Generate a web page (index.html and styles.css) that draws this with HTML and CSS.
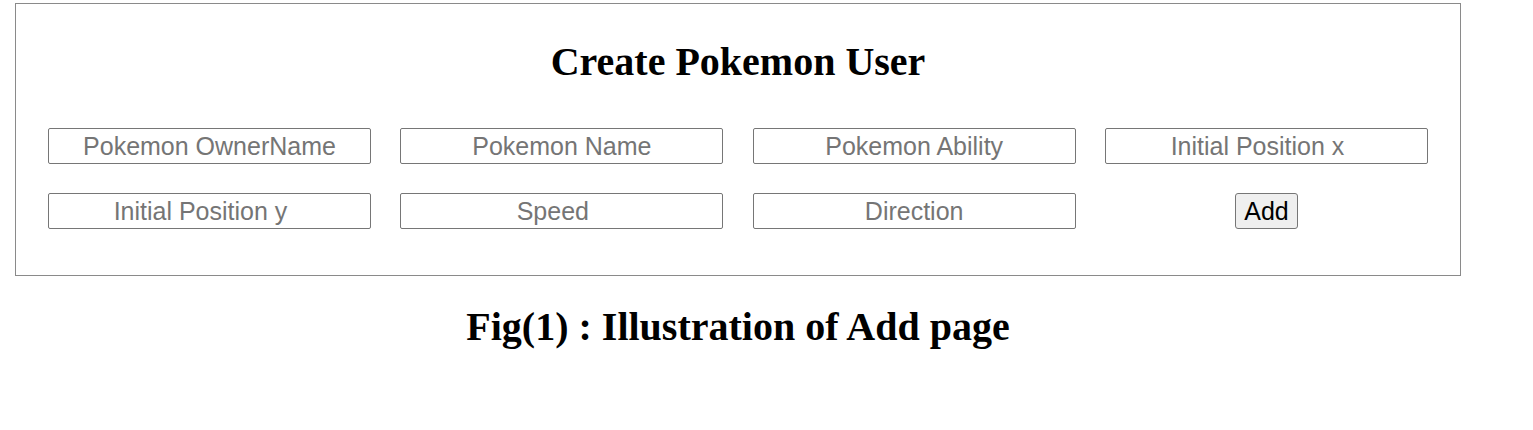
FILE: index.html
```html
<!DOCTYPE html>
<html>
<head>
<meta charset="utf-8">
<title>Create Pokemon User</title>
<link rel="stylesheet" href="styles.css">
</head>
<body>
<div class="page">
  <form class="card">
    <h1 class="title">Create Pokemon User</h1>
    <div class="fields">
      <input class="field" type="text" placeholder="Pokemon OwnerName">
      <input class="field" type="text" placeholder="Pokemon Name">
      <input class="field" type="text" placeholder="Pokemon Ability">
      <input class="field field-num" type="number" placeholder="Initial Position x">
      <input class="field field-num" type="number" placeholder="Initial Position y">
      <input class="field field-num" type="number" placeholder="Speed">
      <input class="field" type="text" placeholder="Direction">
      <button class="add" type="button">Add</button>
    </div>
  </form>
  <h2 class="caption">Fig(1) : Illustration of Add page</h2>
</div>
</body>
</html>
```
FILE: styles.css
```css
html, body {
  margin: 0;
  padding: 0;
  background: #ffffff;
}

.page {
  width: 1446px;
  margin: 3px 0 0 15px;
}

.card {
  border: 1px solid #8a8a8a;
  padding: 0 32px 46px;
  margin: 0;
}

.title {
  font-family: "Liberation Serif", "Times New Roman", serif;
  font-weight: bold;
  font-size: 40px;
  line-height: 46px;
  text-align: center;
  color: #000;
  margin: 35px 0 43px;
}

.fields {
  display: grid;
  grid-template-columns: repeat(4, 1fr);
  column-gap: 29.33px;
  row-gap: 29px;
}

.field {
  box-sizing: border-box;
  height: 36px;
  width: 100%;
  margin: 0;
  padding: 0 2px;
  border: 1px solid #767676;
  border-radius: 2px;
  font-family: "Liberation Sans", Arial, sans-serif;
  font-size: 25px;
  text-align: center;
  color: #000;
  background: #fff;
}

.field-num {
  padding-right: 20px;
  -moz-appearance: textfield;
}

.field-num::-webkit-inner-spin-button,
.field-num::-webkit-outer-spin-button {
  -webkit-appearance: none;
  margin: 0;
}

.field::placeholder {
  color: #757575;
  opacity: 1;
}

.add {
  justify-self: center;
  box-sizing: border-box;
  width: 63px;
  height: 36px;
  margin: 0;
  padding: 0;
  border: 1px solid #767676;
  border-radius: 3px;
  background: #efefef;
  font-family: "Liberation Sans", Arial, sans-serif;
  font-size: 25px;
  color: #000;
}

.caption {
  font-family: "Liberation Serif", "Times New Roman", serif;
  font-weight: bold;
  font-size: 40px;
  line-height: 46px;
  text-align: center;
  color: #000;
  margin: 28px 0 0;
}
```
